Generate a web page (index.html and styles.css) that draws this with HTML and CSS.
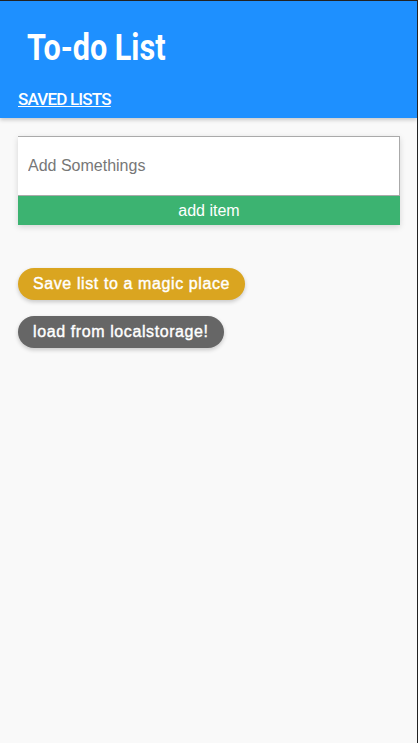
FILE: index.html
```html
<!DOCTYPE html>
<html>
<head>
<meta charset="utf-8">
<link rel="stylesheet" href="styles.css">
</head>
<body>
<div class="frame">
  <header class="header">
    <h1 class="title"><span class="title-text">To-do List</span></h1>
    <a class="saved" href="#">SAVED LISTS</a>
  </header>
  <main class="main">
    <div class="add-box">
      <input class="add-input" type="text" placeholder="Add Somethings">
      <button class="add-btn">add item</button>
    </div>
    <div class="actions">
      <button class="pill pill-save">Save list to a magic place</button>
      <button class="pill pill-load">load from localstorage!</button>
    </div>
  </main>
</div>
</body>
</html>
```

FILE: styles.css
```css
html, body {
  margin: 0;
  padding: 0;
  height: 100%;
}
body {
  background: #f9f9f9;
  font-family: "Liberation Sans", Arial, sans-serif;
}
.frame {
  box-sizing: border-box;
  height: 743px;
  border-top: 1px solid #222;
  border-right: 1px solid #222;
  background: #f9f9f9;
  overflow: hidden;
}
.header {
  background: #1e90ff;
  height: 117px;
  box-sizing: border-box;
  padding: 27px 0 0 18px;
  box-shadow: 0 2px 4px rgba(0,0,0,0.2);
  position: relative;
  z-index: 1;
}
.title {
  margin: 0 0 0 9px;
  font-family: Roboto, sans-serif;
  font-weight: 700;
  font-size: 36px;
  line-height: 40px;
  color: #fff;
}
.title-text {
  display: inline-block;
  transform: scaleX(0.85);
  transform-origin: left center;
}
.saved {
  display: inline-block;
  margin-top: 21px;
  font-family: Roboto, sans-serif;
  font-weight: 500;
  font-size: 17px;
  line-height: 20px;
  letter-spacing: -0.8px;
  color: #fff;
  text-decoration: underline;
}
.main {
  padding: 18px 18px 0 18px;
}
.add-box {
  display: flex;
  flex-direction: column;
  width: 382px;
  box-shadow: 0 2px 6px rgba(0,0,0,0.15);
}
.add-input {
  box-sizing: border-box;
  height: 60px;
  border: 1px solid #aaa;
  border-left: none;
  padding: 0 10px;
  font-family: "Liberation Sans", Arial, sans-serif;
  font-size: 16px;
  background: #fff;
  outline: none;
}
.add-input::placeholder {
  color: #777;
}
.add-btn {
  height: 29px;
  border: none;
  background: #3cb371;
  color: #fff;
  font-family: "Liberation Sans", Arial, sans-serif;
  font-size: 16px;
  padding: 0;
}
.actions {
  display: flex;
  flex-direction: column;
  align-items: flex-start;
  gap: 16px;
  margin-top: 43px;
}
.pill {
  height: 32px;
  border: none;
  border-radius: 16px;
  padding: 0 15px;
  color: #fff;
  font-family: "Liberation Sans", Arial, sans-serif;
  font-weight: normal;
  font-size: 16px;
  letter-spacing: 0.6px;
  -webkit-text-stroke: 0.4px #fff;
  box-shadow: 0 2px 4px rgba(0,0,0,0.2);
}
.pill-save {
  background: #daa520;
}
.pill-load {
  background: #666;
}
```
